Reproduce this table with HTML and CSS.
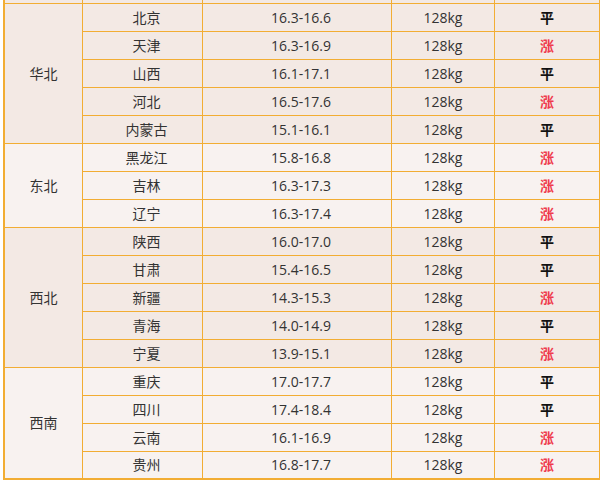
FILE: index.html
```html
<!DOCTYPE html>
<html lang="zh">
<head>
<meta charset="utf-8">
<link rel="stylesheet" href="styles.css">
</head>
<body>
<table class="price">
  <tbody class="head">
    <tr><td class="c-region"></td><td class="c-prov"></td><td class="c-price"></td><td class="c-weight"></td><td class="c-trend"></td></tr>
  </tbody>
  <tbody class="g-dark">
    <tr><td rowspan="5" class="region">华北</td><td class="pl">北京</td><td class="pl">16.3-16.6</td><td>128kg</td><td class="flat">平</td></tr>
    <tr><td class="pl">天津</td><td class="pl">16.3-16.9</td><td>128kg</td><td class="up">涨</td></tr>
    <tr><td class="pl">山西</td><td class="pl">16.1-17.1</td><td>128kg</td><td class="flat">平</td></tr>
    <tr><td class="pl">河北</td><td class="pl">16.5-17.6</td><td>128kg</td><td class="up">涨</td></tr>
    <tr><td class="pl">内蒙古</td><td class="pl">15.1-16.1</td><td>128kg</td><td class="flat">平</td></tr>
  </tbody>
  <tbody class="g-light">
    <tr><td rowspan="3" class="region">东北</td><td class="pl">黑龙江</td><td class="pl">15.8-16.8</td><td>128kg</td><td class="up">涨</td></tr>
    <tr><td class="pl">吉林</td><td class="pl">16.3-17.3</td><td>128kg</td><td class="up">涨</td></tr>
    <tr><td class="pl">辽宁</td><td class="pl">16.3-17.4</td><td>128kg</td><td class="up">涨</td></tr>
  </tbody>
  <tbody class="g-dark">
    <tr><td rowspan="5" class="region">西北</td><td class="pl">陕西</td><td class="pl">16.0-17.0</td><td>128kg</td><td class="flat">平</td></tr>
    <tr><td class="pl">甘肃</td><td class="pl">15.4-16.5</td><td>128kg</td><td class="flat">平</td></tr>
    <tr><td class="pl">新疆</td><td class="pl">14.3-15.3</td><td>128kg</td><td class="up">涨</td></tr>
    <tr><td class="pl">青海</td><td class="pl">14.0-14.9</td><td>128kg</td><td class="flat">平</td></tr>
    <tr><td class="pl">宁夏</td><td class="pl">13.9-15.1</td><td>128kg</td><td class="up">涨</td></tr>
  </tbody>
  <tbody class="g-light">
    <tr><td rowspan="4" class="region last">西南</td><td class="pl">重庆</td><td class="pl">17.0-17.7</td><td>128kg</td><td class="flat">平</td></tr>
    <tr><td class="pl">四川</td><td class="pl">17.4-18.4</td><td>128kg</td><td class="flat">平</td></tr>
    <tr><td class="pl">云南</td><td class="pl">16.1-16.9</td><td>128kg</td><td class="up">涨</td></tr>
    <tr class="last-row"><td class="pl">贵州</td><td class="pl">16.8-17.7</td><td>128kg</td><td class="up">涨</td></tr>
  </tbody>
</table>
</body>
</html>
```

FILE: styles.css
```css
html, body {
  margin: 0;
  padding: 0;
  background: #ffffff;
}
body {
  padding-left: 3px;
  font-family: "Open Sans", "Noto Sans CJK SC", sans-serif;
  font-size: 14px;
  color: #333333;
}
.price {
  border-collapse: separate;
  border-spacing: 0;
  table-layout: fixed;
  width: 597px;
  margin-top: -24px;
  border-left: 2px solid #f2ad33;
}
.price td {
  box-sizing: border-box;
  height: 28px;
  padding: 0;
  border-right: 1px solid #f2ad33;
  border-bottom: 1px solid #f2ad33;
  text-align: center;
  vertical-align: middle;
  line-height: 18px;
}
.price td.c-region { width: 78px; }
.price td.c-prov { width: 120px; }
.price td.c-price { width: 189px; }
.price td.c-weight { width: 103px; }
.price td.c-trend { width: 105px; }
.price td.pl {
  padding-left: 8px;
}
.price .last-row td,
.price td.last {
  border-bottom-width: 2px;
}
.head td { background: #f3e9e4; }
.g-dark td { background: #f3e9e4; }
.g-light td { background: #f8f2f0; }
.flat {
  font-weight: bold;
  color: #111111;
}
.up {
  font-weight: bold;
  color: #ef3b4d;
}
```
